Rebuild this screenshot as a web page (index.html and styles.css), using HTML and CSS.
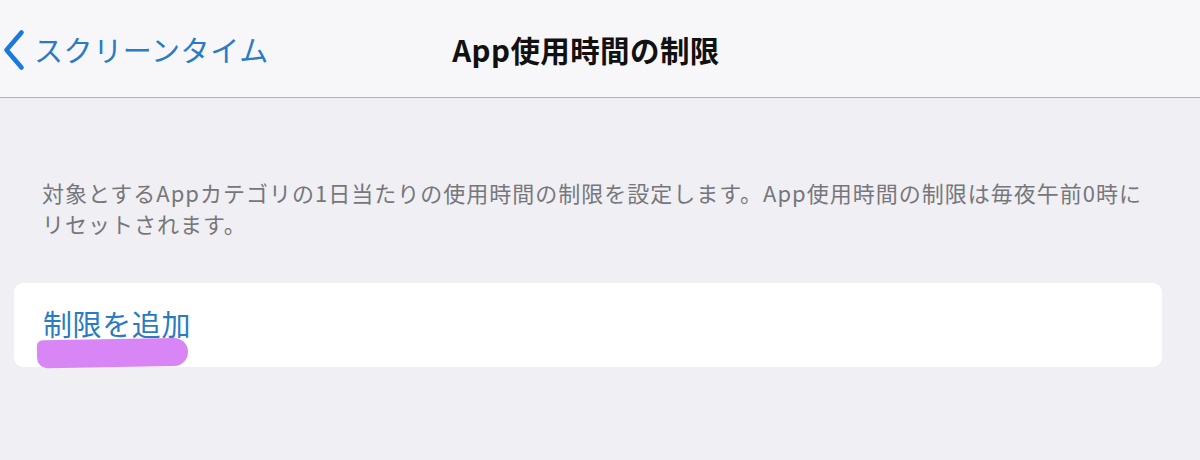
FILE: index.html
```html
<!DOCTYPE html>
<html lang="ja">
<head>
<meta charset="utf-8">
<link rel="stylesheet" href="styles.css">
</head>
<body>
<header class="nav">
  <a class="back">
    <svg class="chevron" width="24" height="42" viewBox="0 0 24 42"><path d="M19.5 3.5 L4.5 21 L19.5 38.5" fill="none" stroke="#1b79dd" stroke-width="4.6" stroke-linecap="round" stroke-linejoin="round"/></svg>
    <span class="back-label">スクリーンタイム</span>
  </a>
  <h1 class="title">App使用時間の制限</h1>
  <div class="spacer"></div>
</header>
<main class="content">
  <p class="desc">対象とするAppカテゴリの1日当たりの使用時間の制限を設定します。App使用時間の制限は毎夜午前0時にリセットされます。</p>
  <section class="card">
    <span class="add">制限を追加</span>
    <span class="mark"></span>
  </section>
</main>
</body>
</html>
```
FILE: styles.css
```css
html, body {
  margin: 0;
  padding: 0;
}
body {
  background: #efeff4;
  font-family: "Noto Sans CJK JP", "Noto Sans", sans-serif;
  width: 1200px;
  height: 460px;
  overflow: hidden;
}
.nav {
  height: 97px;
  background: #f7f7f9;
  border-bottom: 1px solid #b3b3b7;
  display: grid;
  grid-template-columns: 1fr auto 1fr;
  align-items: center;
}
.back {
  display: flex;
  align-items: center;
  gap: 8px;
  padding-left: 2px;
  padding-top: 2px;
}
.chevron {
  display: block;
}
.back-label {
  font-size: 29px;
  color: #2a7bc6;
  line-height: 1;
  letter-spacing: 0.6px;
}
.title {
  margin: 0;
  font-size: 29.5px;
  font-weight: 700;
  color: #111;
  letter-spacing: 0.4px;
  padding-right: 28px;
}
.content {
  padding: 79px 40px 0 42px;
}
.desc {
  margin: 0;
  font-size: 22px;
  line-height: 31px;
  letter-spacing: 1px;
  color: #77777b;
}
.card {
  position: relative;
  margin: 44px -2px 0 -28px;
  height: 84px;
  background: #ffffff;
  border-radius: 9px;
  display: flex;
  align-items: center;
  padding-left: 29px;
}
.add {
  font-size: 29px;
  color: #2a7bc0;
  line-height: 1;
  margin-top: -4px;
  letter-spacing: 0.6px;
}
.mark {
  position: absolute;
  left: 23px;
  top: 56px;
  width: 151px;
  height: 28px;
  background: #d67ff5;
  border-radius: 6px 14px 14px 10px;
  transform: rotate(-1deg);
  opacity: 0.95;
}
```
